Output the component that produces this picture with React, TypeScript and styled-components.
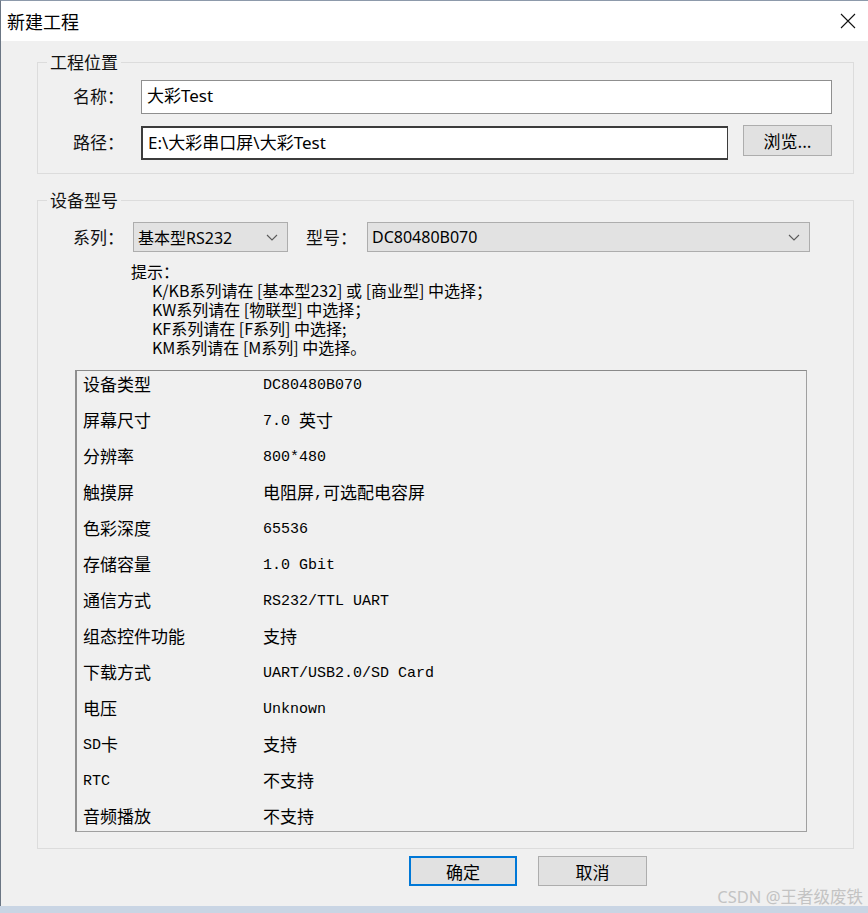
import styled, { createGlobalStyle } from "styled-components"

const GlobalStyle = createGlobalStyle`
  html, body {
    margin: 0;
    padding: 0;
    background: #c9d5e4;
  }
  * {
    box-sizing: border-box;
  }
`

const specs: [string, string][] = [
    ["设备类型", "DC80480B070"],
    ["屏幕尺寸", "7.0 英寸"],
    ["分辨率", "800*480"],
    ["触摸屏", "电阻屏,可选配电容屏"],
    ["色彩深度", "65536"],
    ["存储容量", "1.0 Gbit"],
    ["通信方式", "RS232/TTL UART"],
    ["组态控件功能", "支持"],
    ["下载方式", "UART/USB2.0/SD Card"],
    ["电压", "Unknown"],
    ["SD卡", "支持"],
    ["RTC", "不支持"],
    ["音频播放", "不支持"],
]

const hints = [
    "K/KB系列请在 [基本型232] 或 [商业型] 中选择；",
    "KW系列请在 [物联型] 中选择；",
    "KF系列请在 [F系列] 中选择;",
    "KM系列请在 [M系列] 中选择。",
]

// latin parts in mono, chinese parts a bit bigger, like the old SimSun list
const Mixed = ({ text }: { text: string }) => {
    const parts = text.split(/([\u3000-\u303f\u4e00-\u9fff\uff00-\uffef]+)/).filter(Boolean)
    return (
        <>
            {parts.map((p, i) =>
                /[\u3000-\u303f\u4e00-\u9fff\uff00-\uffef]/.test(p) ? <Han key={i}>{p}</Han> : <Latin key={i}>{p}</Latin>
            )}
        </>
    )
}

const Chevron = () => (
    <svg width="12" height="7" viewBox="0 0 12 7">
        <path d="M1 1 L6 6 L11 1" fill="none" stroke="#5a5a5a" strokeWidth="1.1" />
    </svg>
)

const App = () => {
    return (
        <Page>
            <GlobalStyle />
            <Window>
                <TitleBar>
                    <Title>新建工程</Title>
                    <Close>
                        <svg width="16" height="16" viewBox="0 0 16 16">
                            <path d="M1 1 L15 15 M15 1 L1 15" stroke="#111" strokeWidth="1.1" />
                        </svg>
                    </Close>
                </TitleBar>
                <Body>
                    <Group>
                        <Legend>工程位置</Legend>
                        <FieldRow>
                            <Label>名称：</Label>
                            <TextBox>大彩Test</TextBox>
                        </FieldRow>
                        <FieldRow $gap>
                            <Label>路径：</Label>
                            <TextBox $focused>E:\大彩串口屏\大彩Test</TextBox>
                            <Button $width={89} $height={31}>浏览...</Button>
                        </FieldRow>
                    </Group>

                    <Group $second>
                        <Legend>设备型号</Legend>
                        <ComboRow>
                            <Label $width={60}>系列：</Label>
                            <Combo $width={155}>
                                <span>基本型RS232</span>
                                <Chevron />
                            </Combo>
                            <Label $width={61} $left={18}>型号：</Label>
                            <Combo $width={443}>
                                <span>DC80480B070</span>
                                <Chevron />
                            </Combo>
                        </ComboRow>
                        <Hint>
                            <div>提示：</div>
                            {hints.map((h) => (
                                <HintLine key={h}>{h}</HintLine>
                            ))}
                        </Hint>
                        <SpecList>
                            {specs.map(([k, v]) => (
                                <SpecRow key={k}>
                                    <SpecCell $width={180}><Mixed text={k} /></SpecCell>
                                    <SpecCell><Mixed text={v} /></SpecCell>
                                </SpecRow>
                            ))}
                        </SpecList>
                    </Group>

                    <ButtonBar>
                        <Button $width={108} $height={30} $primary>确定</Button>
                        <Button $width={109} $height={30}>取消</Button>
                    </ButtonBar>
                    <Watermark>CSDN @王者级废铁</Watermark>
                </Body>
            </Window>
        </Page>
    )
}

export default App

const Page = styled.div`
width: 868px;
height: 913px;
overflow: hidden;
background: #c9d5e4;
font-family: "Noto Sans", "Noto Sans CJK SC", sans-serif;
color: #000;
`;
const Window = styled.div`
height: 906px;
display: flex;
flex-direction: column;
border-left: 1px solid #6b7684;
border-top: 1px solid #8d9aab;
background: #f0f0f0;
`;
const TitleBar = styled.div`
height: 40px;
flex-shrink: 0;
background: #fff;
display: flex;
align-items: center;
justify-content: space-between;
padding: 0 12px 0 6px;
`;
const Title = styled.div`
font-family: "Noto Sans CJK SC", sans-serif;
font-size: 18px;
`;
const Close = styled.div`
display: flex;
align-items: center;
`;
const Body = styled.div`
flex: 1;
position: relative;
padding: 11px 14px 0 36px;
display: flex;
flex-direction: column;
`;
const Group = styled.fieldset<{ $second?: boolean }>`
margin: ${(p) => (p.$second ? "16px 0 0" : "0")};
border: 1px solid #dcdcdc;
padding: ${(p) => (p.$second ? "12px 0 16px 35px" : "8px 21px 13px 35px")};
min-width: 0;
`;
const Legend = styled.legend`
font-family: "Noto Sans CJK SC", sans-serif;
font-size: 17px;
line-height: 20px;
padding: 0 3px;
margin-left: -26px;
color: #111;
`;
const FieldRow = styled.div<{ $gap?: boolean }>`
display: flex;
align-items: flex-start;
margin-top: ${(p) => (p.$gap ? "12px" : "0")};
`;
const Label = styled.div<{ $width?: number; $left?: number }>`
width: ${(p) => p.$width ?? 68}px;
margin-left: ${(p) => p.$left ?? 0}px;
flex-shrink: 0;
font-family: "Noto Sans CJK SC", sans-serif;
font-size: 17px;
line-height: 32px;
color: #111;
`;
const TextBox = styled.div<{ $focused?: boolean }>`
flex: 1;
height: 34px;
background: #fff;
border: 1px solid ${(p) => (p.$focused ? "#3c3c3c" : "#8f8f8f")};
border-width: ${(p) => (p.$focused ? "2px 1px 2px 2px" : "1px")};
padding: 0 5px;
font-size: 17px;
line-height: 30px;
white-space: nowrap;
`;
const Button = styled.div<{ $width: number; $height: number; $primary?: boolean }>`
width: ${(p) => p.$width}px;
height: ${(p) => p.$height}px;
flex-shrink: 0;
margin-left: ${(p) => (p.$primary ? "0" : "15px")};
margin-top: -1px;
background: #e1e1e1;
border: ${(p) => (p.$primary ? "2px solid #0078d7" : "1px solid #adadad")};
display: flex;
align-items: center;
justify-content: center;
font-family: "Noto Sans CJK SC", sans-serif;
font-size: 17px;
`;
const ComboRow = styled.div`
display: flex;
align-items: center;
height: 30px;
`;
const Combo = styled.div<{ $width: number }>`
width: ${(p) => p.$width}px;
height: 30px;
background: #e2e2e2;
border: 1px solid #adadad;
display: flex;
align-items: center;
justify-content: space-between;
padding: 0 9px 0 4px;
font-size: 16px;
`;
const Hint = styled.div`
margin: 10px 0 0 58px;
font-family: "Noto Sans CJK SC", sans-serif;
font-size: 16px;
line-height: 19px;
`;
const HintLine = styled.div`
padding-left: 21px;
`;
const SpecList = styled.div`
margin: 13px 0 0 2px;
width: 732px;
height: 462px;
overflow: hidden;
background: #f0f0f0;
border: 1px solid #a0a0a0;
border-top-color: #8a8a8a;
border-left: 2px solid #8f8f8f;
padding: 1px 0 0 6px;
`;
const SpecRow = styled.div`
display: flex;
height: 36px;
`;
const SpecCell = styled.div<{ $width?: number }>`
width: ${(p) => (p.$width ? `${p.$width}px` : "auto")};
flex: ${(p) => (p.$width ? "none" : "1")};
height: 24px;
display: flex;
align-items: center;
`;
const Latin = styled.span`
font-family: "Liberation Mono", monospace;
font-size: 15px;
line-height: 1;
padding-top: 2px;
white-space: pre;
`;
const Han = styled.span`
font-family: "Noto Sans CJK SC", sans-serif;
font-size: 17px;
line-height: 1;
padding-bottom: 2px;
white-space: pre;
`;
const ButtonBar = styled.div`
display: flex;
justify-content: flex-end;
gap: 6px;
margin-top: 8px;
padding-right: 207px;
`;
const Watermark = styled.div`
position: absolute;
right: 5px;
bottom: 0;
font-size: 16.5px;
line-height: 18px;
color: #c3c3c3;
`;
